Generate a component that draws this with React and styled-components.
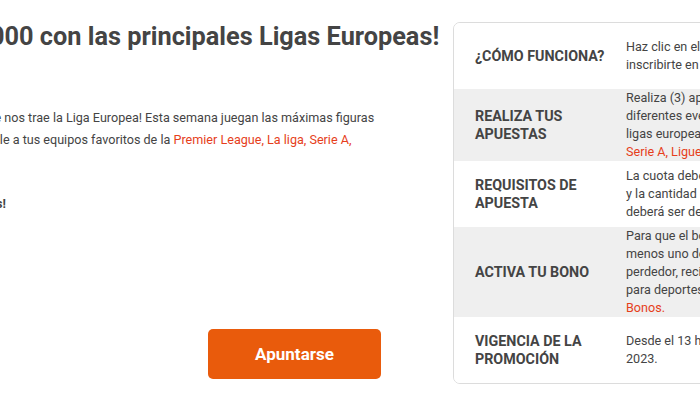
import React from 'react';
import styled, { createGlobalStyle } from 'styled-components';

const colors = {
  text: '#444',
  red: '#e63e1b',
  orange: '#e95b0c',
  grey: '#efefef',
  border: '#dcdcdc',
};

const GlobalStyle = createGlobalStyle`
  html, body {
    margin: 0;
    padding: 0;
    background: #fff;
    overflow: hidden;
  }
  body {
    font-family: Roboto, "Liberation Sans", sans-serif;
    color: ${colors.text};
  }
`;

const Page = styled.div`
  display: flex;
  align-items: flex-start;
  width: 1200px;
  padding-top: 22px;
`;

const Intro = styled.section`
  flex: 0 0 576px;
  margin-left: -135px;
  display: flex;
  flex-direction: column;
`;

const Title = styled.h1`
  margin: 0;
  font-size: 25.3px;
  line-height: 30px;
  font-weight: 700;
  white-space: nowrap;
`;

const Text = styled.p`
  margin: 55px 0 0;
  font-size: 12.6px;
  line-height: 22px;
  white-space: nowrap;
`;

const Strong = styled.p`
  margin: 20px 0 0;
  font-size: 12.6px;
  line-height: 22px;
  font-weight: 700;
  white-space: nowrap;
`;

const Link = styled.span`
  color: ${colors.red};
`;

const Actions = styled.div`
  display: flex;
  margin-top: 114px;
  padding-left: 343px;
`;

const Button = styled.button`
  width: 173px;
  height: 50px;
  border: 0;
  border-radius: 5px;
  background: ${colors.orange};
  color: #fff;
  font-family: Roboto, "Liberation Sans", sans-serif;
  font-size: 17px;
  font-weight: 700;
  cursor: pointer;
`;

const Card = styled.div`
  flex: 0 0 440px;
  margin-left: 12px;
  border: 1px solid ${colors.border};
  border-radius: 7px;
  overflow: hidden;
`;

const Row = styled.div`
  display: grid;
  grid-template-columns: 172px 1fr;
  min-height: 66px;
  background: ${props => (props.shaded ? colors.grey : '#fff')};
`;

const Label = styled.div`
  display: flex;
  align-items: center;
  padding-left: 21px;
  font-size: 14.3px;
  line-height: 18px;
  font-weight: 700;
  text-transform: uppercase;
`;

const Value = styled.div`
  display: flex;
  align-items: center;
  font-size: 12.6px;
  line-height: 18px;
  white-space: nowrap;
`;

const rows = [
  {
    label: <>¿Cómo funciona?</>,
    value: (
      <>
        Haz clic en el botón “Apuntarse” para
        <br />
        inscribirte en la promoción.
      </>
    ),
  },
  {
    label: (
      <>
        Realiza tus
        <br />
        apuestas
      </>
    ),
    value: (
      <>
        Realiza (3) apuestas combinadas en
        <br />
        diferentes eventos de las principales
        <br />
        ligas europeas: <Link>Premier League, La liga,</Link>
        <br />
        <Link>Serie A, Ligue 1 y Bundesliga.</Link>
      </>
    ),
  },
  {
    label: (
      <>
        Requisitos de
        <br />
        apuesta
      </>
    ),
    value: (
      <>
        La cuota deberá ser mínima de 1.50
        <br />
        y la cantidad de selecciones
        <br />
        deberá ser de 3 como mínimo.
      </>
    ),
  },
  {
    label: <>Activa tu bono</>,
    value: (
      <>
        Para que el bono se active, al
        <br />
        menos uno de tus eventos debe ser
        <br />
        perdedor, recibirás un bono de S/ 20
        <br />
        para deportes. Revisa tu sección
        <br />
        <Link>Bonos.</Link>
      </>
    ),
  },
  {
    label: (
      <>
        Vigencia de la
        <br />
        promoción
      </>
    ),
    value: (
      <>
        Desde el 13 hasta el 19 de marzo del
        <br />
        2023.
      </>
    ),
  },
];

export default function App() {
  return (
    <>
      <GlobalStyle />
      <Page>
        <Intro>
          <Title>¡Gana S/. 1000 con las principales Ligas Europeas!</Title>
          <Text>
            ¡Disfruta la emoción que nos trae la Liga Europea! Esta semana juegan las máximas figuras
            <br />
            del fútbol, juega y apóyale a tus equipos favoritos de la{' '}
            <Link>Premier League, La liga, Serie A,</Link>
            <br />
            <Link>Ligue 1 y Bundesliga.</Link>
          </Text>
          <Strong>¡Participa y obtén bonos!</Strong>
          <Actions>
            <Button type="button">Apuntarse</Button>
          </Actions>
        </Intro>
        <Card>
          {rows.map((row, i) => (
            <Row key={i} shaded={i % 2 === 1}>
              <Label>{row.label}</Label>
              <Value>
                <div>{row.value}</div>
              </Value>
            </Row>
          ))}
        </Card>
      </Page>
    </>
  );
}
